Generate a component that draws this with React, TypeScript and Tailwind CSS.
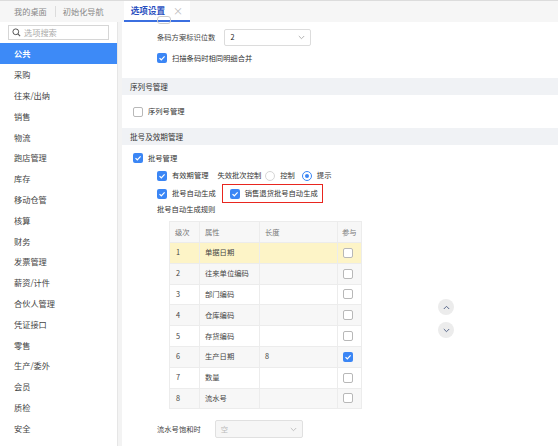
import React from "react";

const font = { fontFamily: '"Noto Sans CJK SC", "Noto Sans", sans-serif' };

function Check({ checked }: { checked?: boolean }) {
  return checked ? (
    <span className="inline-flex h-[10px] w-[10px] shrink-0 items-center justify-center rounded-[2px] bg-[#3b86f5]">
      <svg width="8" height="8" viewBox="0 0 8 8">
        <path d="M1.5 4.1 L3.3 5.8 L6.6 2.3" fill="none" stroke="#fff" strokeWidth="1.2" />
      </svg>
    </span>
  ) : (
    <span className="inline-block h-[10px] w-[10px] shrink-0 rounded-[2px] border border-[#b8b8b8] bg-white" />
  );
}

function Radio({ checked }: { checked?: boolean }) {
  return checked ? (
    <span className="inline-flex h-[10px] w-[10px] items-center justify-center rounded-full border border-[#3b86f5] bg-white">
      <span className="h-[4px] w-[4px] rounded-full bg-[#3b86f5]" />
    </span>
  ) : (
    <span className="inline-block h-[10px] w-[10px] rounded-full border border-[#d6d6d6] bg-white" />
  );
}

function Chevron({ color = "#aaa" }: { color?: string }) {
  return (
    <svg width="7" height="5" viewBox="0 0 7 5">
      <path d="M0.8 1 L3.5 3.7 L6.2 1" fill="none" stroke={color} strokeWidth="0.9" />
    </svg>
  );
}

const nav = [
  "采购", "往来/出纳", "销售", "物流", "跑店管理", "库存", "移动仓管", "核算", "财务",
  "发票管理", "薪资/计件", "合伙人管理", "凭证接口", "零售", "生产/委外", "会员", "质检", "安全",
];

const rows: [string, string, string, boolean][] = [
  ["1", "单据日期", "", false],
  ["2", "往来单位编码", "", false],
  ["3", "部门编码", "", false],
  ["4", "仓库编码", "", false],
  ["5", "存货编码", "", false],
  ["6", "生产日期", "8", true],
  ["7", "数量", "", false],
  ["8", "流水号", "", false],
];

export default function App() {
  return (
    <div className="flex h-[446px] w-[558px] flex-col overflow-hidden bg-white text-[7.3px] text-[#333]" style={font}>
      {/* top tabs */}
      <div className="flex h-[22px] shrink-0 items-stretch border-t border-[#dcdcdc] bg-[#f6f6f6] text-[8.2px]">
        <div className="flex items-center pl-[14px] pr-[8px] text-[#888]">我的桌面</div>
        <div className="my-[5px] w-px bg-[#dcdcdc]" />
        <div className="flex items-center pl-[7px] text-[#888]">初始化导航</div>
        <div className="ml-[20px] flex items-center border-b-2 border-[#3b6fe0] bg-white pl-[7px] pr-[7px] text-[8.6px] font-semibold text-[#2a4fc0]">
          选项设置
          <span className="ml-[8px] text-[10px] font-normal text-[#bbb]">×</span>
        </div>
      </div>

      <div className="flex min-h-0 flex-1">
        {/* sidebar */}
        <div className="w-[118px] shrink-0 border-r border-[#e6e6e6] bg-white text-[8.2px]">
          <div className="px-[8px] pt-[3px] pb-[3px]">
            <div className="flex h-[15px] items-center gap-[3px] border border-[#d6d6d6] px-[3px] text-[#aaa]">
              <svg width="9" height="9" viewBox="0 0 10 10">
                <circle cx="4.2" cy="4.2" r="3.2" fill="none" stroke="#555" strokeWidth="1.1" />
                <path d="M6.6 6.6 L9 9" stroke="#555" strokeWidth="1.2" />
              </svg>
              选项搜索
            </div>
          </div>
          <div className="flex h-[21px] items-center bg-[#3d8af7] pl-[14px] font-semibold text-white">公共</div>
          {nav.map((n) => (
            <div key={n} className="flex h-[20.8px] items-center pl-[14px] text-[#444]">
              {n}
            </div>
          ))}
        </div>
        <div className="w-[4px] shrink-0 bg-[#f3f3f3]" />

        {/* main */}
        <div className="relative min-w-0 flex-1 bg-white">
          <div className="absolute left-[35px] top-[-6px] h-[8px] w-[14px] rounded-[3px] border border-[#ccc]" />
          <div className="pl-[35px] pt-[7px]">
            <div className="flex items-center gap-[9px]">
              <span className="text-[#444]">条码方案标识位数</span>
              <div className="flex h-[17px] w-[87px] items-center justify-between rounded-[2px] border border-[#dcdcdc] px-[5px]">
                <span className="text-[#222]">2</span>
                <Chevron />
              </div>
            </div>
            <div className="mt-[5px] flex h-[14px] items-center gap-[5px]">
              <Check checked />
              <span>扫描条码时相同明细合并</span>
            </div>
          </div>

          <div className="mt-[13px] flex h-[17px] items-center bg-[#f0f2f5] pl-[8px] text-[7.6px] text-[#333]">序列号管理</div>
          <div className="flex h-[33px] items-center gap-[5px] pl-[11px]">
            <Check />
            <span>序列号管理</span>
          </div>

          <div className="flex h-[17px] items-center bg-[#f0f2f5] pl-[8px] text-[7.6px] text-[#333]">批号及效期管理</div>
          <div className="mt-[6px] flex h-[14px] items-center gap-[5px] pl-[11px]">
            <Check checked />
            <span>批号管理</span>
          </div>

          <div className="pl-[35px]">
            <div className="mt-[3px] flex h-[15px] items-center">
              <Check checked />
              <span className="ml-[5px]">有效期管理</span>
              <span className="ml-[9px]">失效批次控制</span>
              <span className="ml-[4px] flex"><Radio /></span>
              <span className="ml-[5px]">控制</span>
              <span className="ml-[7px] flex"><Radio checked /></span>
              <span className="ml-[5px]">提示</span>
            </div>
            <div className="mt-[1px] flex h-[19px] items-center">
              <Check checked />
              <span className="ml-[5px]">批号自动生成</span>
              <div className="ml-[6px] flex h-[19px] w-[101px] items-center gap-[5px] border-[1.5px] border-[#e8261f] pl-[7px]">
                <Check checked />
                <span className="whitespace-nowrap">销售退货批号自动生成</span>
              </div>
            </div>
            <div className="flex h-[12px] items-center">批号自动生成规则</div>

            <div className="flex">
              <div className="ml-[12px] mt-[6px] w-[193px] border border-[#ececec]">
                <div className="flex h-[20px] items-center bg-[#f7f7f7] text-[#777]">
                  <div className="w-[30px] border-r border-[#ececec] pl-[5px] leading-[20px]">级次</div>
                  <div className="w-[60px] border-r border-[#ececec] pl-[5px] leading-[20px]">属性</div>
                  <div className="w-[78px] border-r border-[#ececec] pl-[5px] leading-[20px]">长度</div>
                  <div className="flex-1 pl-[4px] leading-[20px]">参与</div>
                </div>
                {rows.map(([n, a, l, c], i) => (
                  <div
                    key={n}
                    className={`flex h-[20.8px] items-center border-t border-[#ececec] ${
                      i === 0 ? "bg-[#fdf4c7]" : i % 2 === 1 ? "bg-[#f7f7f7]" : "bg-white"
                    }`}
                  >
                    <div className="flex h-full w-[30px] items-center border-r border-[#ececec] pl-[6px] text-[#444]">{n}</div>
                    <div className="flex h-full w-[60px] items-center border-r border-[#ececec] pl-[5px] text-[#444]">{a}</div>
                    <div className="flex h-full w-[78px] items-center border-r border-[#ececec] pl-[5px] text-[#444]">{l}</div>
                    <div className="flex h-full flex-1 items-center pl-[5px]">
                      <Check checked={c} />
                    </div>
                  </div>
                ))}
              </div>
              <div className="ml-[76px] mt-[84px] flex flex-col gap-[7px]">
                <div className="flex h-[16px] w-[16px] items-center justify-center rounded-full bg-[#ececec]">
                  <svg width="7" height="5" viewBox="0 0 7 5">
                    <path d="M0.8 4 L3.5 1.3 L6.2 4" fill="none" stroke="#4a5a80" strokeWidth="0.9" />
                  </svg>
                </div>
                <div className="flex h-[16px] w-[16px] items-center justify-center rounded-full bg-[#ececec]">
                  <Chevron color="#4a5a80" />
                </div>
              </div>
            </div>

            <div className="mt-[11px] flex items-center gap-[14px]">
              <span className="text-[#444]">流水号饱和时</span>
              <div className="flex h-[18px] w-[88px] items-center justify-between rounded-[2px] border border-[#e0e0e0] bg-[#f6f6f6] px-[5px]">
                <span className="text-[#bbb]">空</span>
                <Chevron color="#bbb" />
              </div>
            </div>
          </div>
        </div>
      </div>
    </div>
  );
}
